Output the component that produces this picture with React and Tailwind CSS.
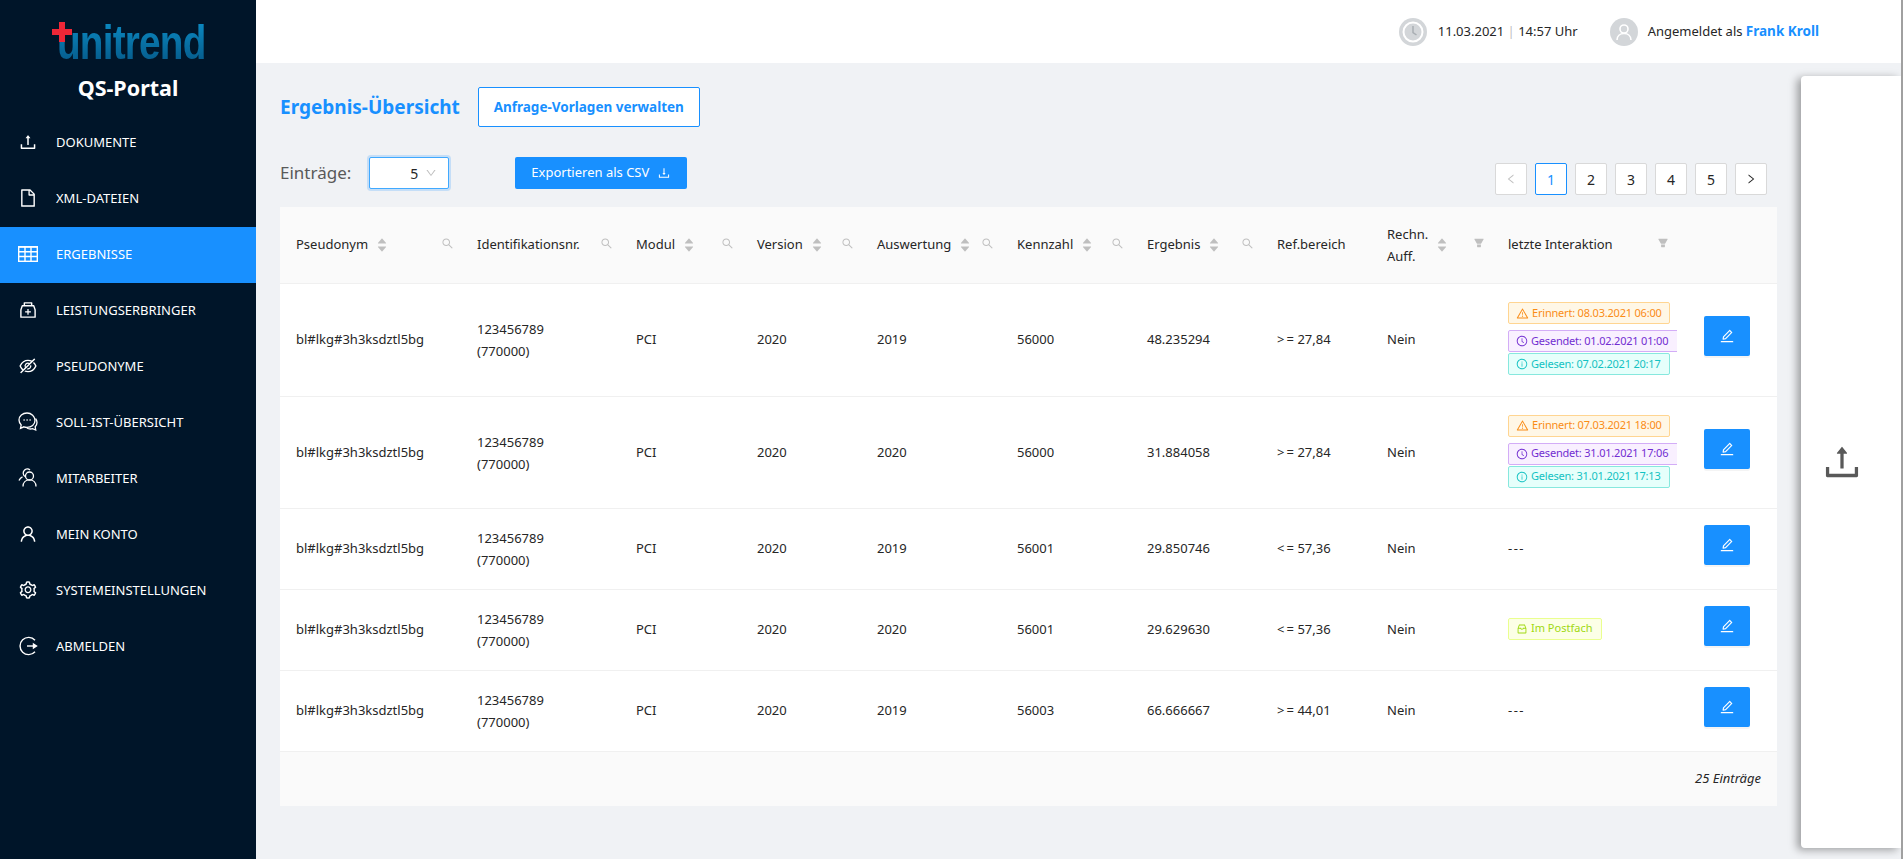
import {
  AiOutlineUpload,
  AiOutlineFile,
  AiOutlineMedicineBox,
  AiOutlineEyeInvisible,
  AiOutlineUser,
  AiOutlineSetting,
  AiOutlineDown,
  AiOutlineDownload,
  AiOutlineSearch,
  AiFillFilter,
  AiFillCaretUp,
  AiFillCaretDown,
  AiOutlineLeft,
  AiOutlineRight,
  AiOutlineWarning,
  AiOutlineClockCircle,
  AiOutlineInfoCircle,
  AiOutlineEdit,
  AiOutlineInbox,
} from 'react-icons/ai';

const TableIcon = () => (
  <svg width="20" height="16" viewBox="0 0 20 16" fill="none" stroke="currentColor" strokeWidth="1.4">
    <rect x="0.7" y="1" width="18.6" height="14.3" />
    <path d="M1 5.7h18M1 10.500h18M7 1v14M13 1v14" />
    <path d="M0 0h20v1.500H0z" fill="currentColor" stroke="none" />
  </svg>
);

const CommentsIcon = () => (
  <svg width="20" height="20" viewBox="0 0 20 20" fill="none" stroke="currentColor" strokeWidth="1.3">
    <path d="M9 1C4.600 1 1 4 1 8c0 2 .9 3.700 2.200 5l-.7 3.300 3.400-1.500c1 .4 2 .5 3.100.5 4.400 0 8-2.800 8-6.800S13.400 1 9 1z" />
    <path d="M17.500 6.500c1 1.200 1.500 2.600 1.500 4 0 1.800-.8 3.200-1.800 4.300l.5 3.200-3.200-1.300c-2 .6-4 .3-5.700-.7" />
    <path d="M5.500 8h1.200M8.500 8h1.200M11.500 8h1.200" strokeWidth="1.500" />
  </svg>
);

const PeopleIcon = () => (
  <svg width="20" height="20" viewBox="0 0 20 20" fill="none" stroke="currentColor" strokeWidth="1.3">
    <circle cx="11.500" cy="8" r="4" />
    <path d="M5 18.500c0-4 2.800-6.600 6.500-6.600s6.500 2.600 6.500 6.600" />
    <path d="M7 8.500a4 4 0 0 1-.6-6.200 4 4 0 0 1 5.600-.3" />
    <path d="M1 12.500c.8-1.800 2-3 3.500-3.600" />
  </svg>
);

const LogoutIcon = () => (
  <svg width="20" height="20" viewBox="0 0 20 20" fill="none" stroke="currentColor" strokeWidth="1.4">
    <path d="M17 4.200A8.600 8.600 0 1 0 17 15.800" />
    <path d="M9 10h9" />
    <path d="M15.500 8l3 2-3 2z" fill="currentColor" />
  </svg>
);

const NAV = [
  { label: 'DOKUMENTE', icon: <AiOutlineUpload size={20} /> },
  { label: 'XML-DATEIEN', icon: <AiOutlineFile size={20} /> },
  { label: 'ERGEBNISSE', icon: <TableIcon />, active: true },
  { label: 'LEISTUNGSERBRINGER', icon: <AiOutlineMedicineBox size={20} /> },
  { label: 'PSEUDONYME', icon: <AiOutlineEyeInvisible size={20} /> },
  { label: 'SOLL-IST-ÜBERSICHT', icon: <CommentsIcon /> },
  { label: 'MITARBEITER', icon: <PeopleIcon /> },
  { label: 'MEIN KONTO', icon: <AiOutlineUser size={20} /> },
  { label: 'SYSTEMEINSTELLUNGEN', icon: <AiOutlineSetting size={20} /> },
  { label: 'ABMELDEN', icon: <LogoutIcon /> },
];

const COLUMNS = [
  { title: 'Pseudonym', width: 'w-[181px]', sort: true, tool: 'search' },
  { title: 'Identifikationsnr.', width: 'w-[159px]', tool: 'search' },
  { title: 'Modul', width: 'w-[121px]', sort: true, tool: 'search' },
  { title: 'Version', width: 'w-[120px]', sort: true, tool: 'search' },
  { title: 'Auswertung', width: 'w-[140px]', sort: true, tool: 'search' },
  { title: 'Kennzahl', width: 'w-[130px]', sort: true, tool: 'search' },
  { title: 'Ergebnis', width: 'w-[130px]', sort: true, tool: 'search' },
  { title: 'Ref.bereich', width: 'w-[110px]' },
  { title: 'Rechn. Auff.', width: 'w-[121px]', sort: true, tool: 'filter', twoLines: true },
  { title: 'letzte Interaktion', width: 'w-[196px]', tool: 'filter', pad: 'pr-[19px]' },
  { title: '', width: 'w-[89px]' },
];

const ROWS = [
  {
    year: '2019', code: '56000', result: '48.235294', ref: '>\u2009= 27,84', height: 'h-[113px]',
    tags: [
      { kind: 'warn', text: 'Erinnert: 08.03.2021 06:00' },
      { kind: 'sent', text: 'Gesendet: 01.02.2021 01:00' },
      { kind: 'read', text: 'Gelesen: 07.02.2021 20:17' },
    ],
  },
  {
    year: '2020', code: '56000', result: '31.884058', ref: '>\u2009= 27,84', height: 'h-[112px]',
    tags: [
      { kind: 'warn', text: 'Erinnert: 07.03.2021 18:00' },
      { kind: 'sent', text: 'Gesendet: 31.01.2021 17:06' },
      { kind: 'read', text: 'Gelesen: 31.01.2021 17:13' },
    ],
  },
  { year: '2019', code: '56001', result: '29.850746', ref: '<\u2009= 57,36', height: 'h-[81px]', tags: [] },
  {
    year: '2020', code: '56001', result: '29.629630', ref: '<\u2009= 57,36', height: 'h-[81px]',
    tags: [{ kind: 'inbox', text: 'Im Postfach' }],
  },
  { year: '2019', code: '56003', result: '66.666667', ref: '>\u2009= 44,01', height: 'h-[81px]', tags: [] },
];

const cellBorder = 'border-b border-[#f0f0f0]';

function Tag({ kind, text }) {
  if (kind === 'warn') {
    return (
      <div className="mb-[6px] flex h-[22px] w-[162px] items-center gap-[3px] whitespace-nowrap rounded-[2px] border border-[#ffd591] bg-[#fff7e6] px-[7px] text-[11px] tracking-[-0.2px] text-[#fa8c16]">
        <AiOutlineWarning size={13} className="shrink-0" />
        {text}
      </div>
    );
  }
  if (kind === 'sent') {
    return (
      <div className="mb-[1px] flex h-[22px] w-[180px] items-center gap-[3px] whitespace-nowrap rounded-[2px] border border-[#d3adf7] bg-[#f9f0ff] px-[7px] text-[11px] tracking-[-0.2px] text-[#722ed1]">
        <AiOutlineClockCircle size={12} className="shrink-0" />
        {text}
      </div>
    );
  }
  if (kind === 'read') {
    return (
      <div className="flex h-[22px] w-[162px] items-center gap-[3px] whitespace-nowrap rounded-[2px] border border-[#87e8de] bg-[#e6fffb] px-[7px] text-[11px] tracking-[-0.2px] text-[#13c2c2]">
        <AiOutlineInfoCircle size={12} className="shrink-0" />
        {text}
      </div>
    );
  }
  return (
    <div className="flex h-[22px] w-[94px] items-center gap-[3px] whitespace-nowrap rounded-[2px] border border-[#eaff8f] bg-[#fcffe6] px-[7px] text-[11px] text-[#a0d911]">
      <AiOutlineInbox size={12} className="shrink-0" />
      {text}
    </div>
  );
}

function SortCaret() {
  return (
    <span className="ml-2 flex flex-col text-[#bfbfbf]">
      <AiFillCaretUp size={12} className="-mb-[4px]" />
      <AiFillCaretDown size={12} />
    </span>
  );
}

function Sidebar() {
  return (
    <aside className="w-64 shrink-0 bg-[#001529] text-white">
      <div className="h-[115px] pt-[20px]">
        <div className="relative mx-auto h-[42px] w-[156px]">
          <span className="absolute left-[7px] top-[-8px] origin-left scale-x-[0.79] bg-gradient-to-b from-[#0d95cf] to-[#05517f] bg-clip-text font-['Liberation_Sans',sans-serif] text-[49px] font-bold leading-[60px] tracking-[-1px] text-transparent">
            unitrend
          </span>
          <svg className="absolute left-[2px] top-[2px]" width="20" height="20" viewBox="0 0 20 20">
            <path d="M7 0h6v7h7v6h-7v7H7v-7H0V7h7z" fill="#ee2737" />
          </svg>
        </div>
        <div className="mt-[12px] text-center text-[21.5px] font-bold leading-[28px]">QS-Portal</div>
      </div>
      <nav>
        {NAV.map((item) => (
          <div
            key={item.label}
            className={`flex h-14 items-center pl-[18px] text-[13px] ${item.active ? 'bg-[#1890ff]' : ''}`}
          >
            <span className="flex w-[20px] -translate-y-[1px] items-center justify-center">{item.icon}</span>
            <span className="ml-[18px]">{item.label}</span>
          </div>
        ))}
      </nav>
    </aside>
  );
}

function Header() {
  return (
    <header className="flex h-[63px] items-center justify-end bg-white pr-[84px] text-[13px] text-[#262626]">
      <span className="flex h-7 w-7 items-center justify-center rounded-full bg-[#d3d6d9]">
        <svg width="22" height="22" viewBox="0 0 22 22" fill="none">
          <circle cx="11" cy="11" r="9.500" stroke="white" strokeWidth="2" />
          <path d="M11 5v6.500l3.500 2.500" stroke="#a9aeb3" strokeWidth="1.500" />
        </svg>
      </span>
      <span className="ml-[11px]">
        11.03.2021 <span className="text-[#bfbfbf]">|</span> 14:57 Uhr
      </span>
      <span className="ml-[32px] flex h-7 w-7 items-center justify-center rounded-full bg-[#d3d6d9] text-white">
        <svg width="20" height="20" viewBox="0 0 20 20" fill="none" stroke="currentColor" strokeWidth="1.600">
          <circle cx="10" cy="7" r="4" />
          <path d="M3 18c0-4 3-6.500 7-6.500s7 2.500 7 6.500" />
        </svg>
      </span>
      <span className="ml-[10px]">
        Angemeldet als <span className="text-[13.5px] font-bold text-[#1890ff]">Frank Kroll</span>
      </span>
    </header>
  );
}

function Pagination() {
  const cell = 'flex h-8 w-8 items-center justify-center rounded-[2px] border border-[#d9d9d9] bg-white text-[14px] text-[#262626]';
  return (
    <div className="flex gap-2">
      <span className={`${cell} !text-[#bfbfbf]`}><AiOutlineLeft size={12} /></span>
      <span className="flex h-8 w-8 items-center justify-center rounded-[2px] border border-[#1890ff] bg-white text-[14px] text-[#1890ff]">1</span>
      <span className={cell}>2</span>
      <span className={cell}>3</span>
      <span className={cell}>4</span>
      <span className={cell}>5</span>
      <span className={cell}><AiOutlineRight size={12} /></span>
    </div>
  );
}

function ResultTable() {
  return (
    <div className="mt-3 w-[1497px] bg-white text-[13px] text-[#262626]">
      <table className="w-full table-fixed border-separate border-spacing-0">
        <colgroup>
          {COLUMNS.map((col, i) => (
            <col key={i} className={col.width} />
          ))}
        </colgroup>
        <thead>
          <tr className="h-[77px] bg-[#fafafa]">
            {COLUMNS.map((col, i) => (
              <th key={i} className={`${cellBorder} pl-4 text-left font-normal ${col.pad || 'pr-[7px]'}`}>
                {col.title && (
                  <div className="flex items-center justify-between">
                    <div className="flex items-center">
                      {col.twoLines ? (
                        <span className="leading-[22px]">Rechn.<br />Auff.</span>
                      ) : (
                        <span className="whitespace-nowrap">{col.title}</span>
                      )}
                      {col.sort && <SortCaret />}
                    </div>
                    {col.tool === 'search' && <AiOutlineSearch size={13} className="-mt-1 text-[#bfbfbf]" />}
                    {col.tool === 'filter' && <AiFillFilter size={12} className="-mt-1 text-[#bfbfbf]" />}
                  </div>
                )}
              </th>
            ))}
          </tr>
        </thead>
        <tbody>
          {ROWS.map((row, i) => (
            <tr key={i} className={row.height}>
              <td className={`${cellBorder} px-4`}>bl#lkg#3h3ksdztl5bg</td>
              <td className={`${cellBorder} px-4 leading-[22px]`}>123456789<br />(770000)</td>
              <td className={`${cellBorder} px-4`}>PCI</td>
              <td className={`${cellBorder} px-4`}>2020</td>
              <td className={`${cellBorder} px-4`}>{row.year}</td>
              <td className={`${cellBorder} px-4`}>{row.code}</td>
              <td className={`${cellBorder} px-4`}>{row.result}</td>
              <td className={`${cellBorder} px-4`}>{row.ref}</td>
              <td className={`${cellBorder} px-4`}>Nein</td>
              <td className={`${cellBorder} pl-4`}>
                {row.tags.length === 0 ? (
                  <span className="tracking-[1.5px]">---</span>
                ) : (
                  <div className="mb-[3px] w-[169px] overflow-hidden">
                    {row.tags.map((tag) => (
                      <Tag key={tag.text} kind={tag.kind} text={tag.text} />
                    ))}
                  </div>
                )}
              </td>
              <td className={`${cellBorder} pl-4`}>
                <button className="mb-2 flex h-10 w-[46px] items-center justify-center rounded-[2px] bg-[#1890ff] text-white shadow-[0_2px_0_rgba(0,0,0,0.045)]">
                  <AiOutlineEdit size={16} />
                </button>
              </td>
            </tr>
          ))}
        </tbody>
      </table>
      <div className="flex h-[54px] items-center justify-end bg-[#fafafa] pr-4 italic">25 Einträge</div>
    </div>
  );
}

export default function App() {
  return (
    <div className="relative flex h-[859px] w-[1903px] overflow-hidden bg-[#f0f2f5] font-['Noto_Sans',sans-serif]">
      <Sidebar />
      <main className="flex-1">
        <Header />
        <div className="px-6 pt-6">
          <div className="flex items-center">
            <h1 className="text-[19px] font-bold text-[#1890ff]">Ergebnis-Übersicht</h1>
            <button className="ml-[18px] h-10 w-[222px] rounded-[2px] border border-[#1890ff] bg-white text-[13.5px] font-bold text-[#1890ff]">
              Anfrage-Vorlagen verwalten
            </button>
          </div>
          <div className="mt-[30px] flex items-start">
            <span className="mt-[3px] text-[17px] text-[#595959]">Einträge:</span>
            <div className="ml-[18px] flex h-8 w-20 items-center justify-end rounded-[2px] border border-[#40a9ff] bg-white pr-[11px] text-[14px] text-[#262626] shadow-[0_0_0_2px_rgba(24,144,255,0.2)]">
              5
              <AiOutlineDown size={12} className="ml-[7px] text-[#bfbfbf]" />
            </div>
            <button className="ml-[66px] flex h-8 w-[172px] items-center justify-center gap-2 rounded-[2px] bg-[#1890ff] text-[13px] text-white">
              Exportieren als CSV
              <AiOutlineDownload size={14} />
            </button>
            <div className="ml-auto mr-[112px] mt-[6px]">
              <Pagination />
            </div>
          </div>
          <ResultTable />
        </div>
      </main>
      {/* Aufklappbares Panel rechts */}
      <div className="absolute left-[1801px] top-[76px] flex h-[772px] w-[100px] items-center justify-center rounded-l-[4px] bg-white pr-[18px] text-[#595959] shadow-[-4px_2px_8px_rgba(0,0,0,0.35)]">
        <AiOutlineUpload size={44} />
      </div>
      <div className="absolute right-0 top-0 h-full w-[2px] bg-[#a0a0a0]" />
    </div>
  );
}
